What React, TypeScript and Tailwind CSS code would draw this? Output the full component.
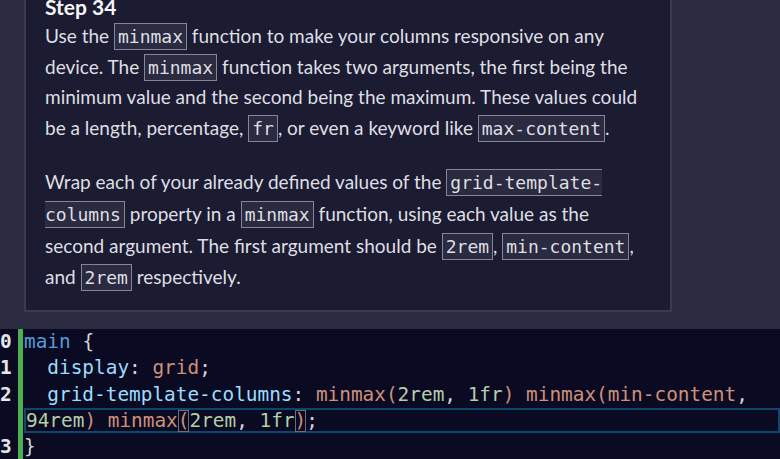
import React from "react";

const mono = "font-['DejaVu_Sans_Mono','Liberation_Mono',monospace]";

function Code({ children }: { children: React.ReactNode }) {
  return (
    <code
      className={`${mono} text-[18px] leading-none px-[3px] py-[2px] border border-[#85859a] bg-[#2a2a40] text-[#dfdfe2]`}
    >
      {children}
    </code>
  );
}

type Tok = { t: string; c?: string; match?: boolean };

const SEL = "text-[#569cd6]";
const PROP = "text-[#9cdcfe]";
const VAL = "text-[#ce9178]";
const NUM = "text-[#b5cea8]";
const PUN = "text-[#d4d4d4]";

const rows: { n?: string; toks: Tok[]; active?: boolean }[] = [
  { n: "0", toks: [{ t: "main", c: SEL }, { t: " {", c: PUN }] },
  {
    n: "1",
    toks: [
      { t: "  display", c: PROP },
      { t: ": ", c: PUN },
      { t: "grid", c: VAL },
      { t: ";", c: PUN },
    ],
  },
  {
    n: "2",
    toks: [
      { t: "  grid-template-columns", c: PROP },
      { t: ": ", c: PUN },
      { t: "minmax(", c: VAL },
      { t: "2rem", c: NUM },
      { t: ", ", c: PUN },
      { t: "1fr", c: NUM },
      { t: ") minmax(min-content", c: VAL },
      { t: ",", c: PUN },
    ],
  },
  {
    active: true,
    toks: [
      { t: "94rem", c: NUM },
      { t: ") minmax", c: VAL },
      { t: "(", c: VAL, match: true },
      { t: "2rem", c: NUM },
      { t: ", ", c: PUN },
      { t: "1fr", c: NUM },
      { t: ")", c: VAL, match: true },
      { t: ";", c: PUN },
    ],
  },
  { n: "3", toks: [{ t: "}", c: PUN }] },
];

export default function App() {
  return (
    <div className="w-[780px] h-[459px] overflow-hidden bg-[#2a2a40] flex flex-col font-['Lato',sans-serif]">
      {/* instructions panel, scrolled so its top is cut off */}
      <div className="h-[329px] shrink-0 flex flex-col justify-end overflow-hidden pl-[24px] pb-[17px]">
        <div className="w-[648px] border-2 border-t-0 border-[#3b3b4f] bg-[#1b1b32] px-[19px] pb-[17px] text-[#dfdfe2] text-[19px]">
          <h2 className="text-[21px] font-bold leading-[27.5px] text-[#f5f6f7]">Step 34</h2>
          <p className="leading-[30.7px] whitespace-nowrap">
            Use the <Code>minmax</Code> function to make your columns responsive on any
            <br />
            device. The <Code>minmax</Code> function takes two arguments, the first being the
            <br />
            minimum value and the second being the maximum. These values could
            <br />
            be a length, percentage, <Code>fr</Code>, or even a keyword like <Code>max-content</Code>.
          </p>
          <p className="mt-[22.4px] leading-[31.7px] whitespace-nowrap">
            Wrap each of your already defined values of the{" "}
            <Code>
              grid-template-
              <br />
              columns
            </Code>{" "}
            property in a <Code>minmax</Code> function, using each value as the
            <br />
            second argument. The first argument should be <Code>2rem</Code>, <Code>min-content</Code>,
            <br />
            and <Code>2rem</Code> respectively.
          </p>
        </div>
      </div>

      {/* code editor */}
      <div className={`flex-1 bg-[#0a0a23] ${mono} text-[19.4px] leading-[26.25px] whitespace-pre`}>
        {rows.map((r, i) => (
          <div key={i} className="flex h-[26.25px]">
            <div className="w-[18px] shrink-0 font-bold text-[#e6e6ea]">{r.n ?? ""}</div>
            <div className="w-[5px] shrink-0 bg-[#4caf50]" />
            <div
              className={`flex-1 ${
                r.active
                  ? "ml-[1px] border-2 border-[#0f476c] h-[25.5px] leading-[22px]"
                  : "pl-[1px]"
              }`}
            >
              {r.toks.map((tk, j) => (
                <span
                  key={j}
                  className={`${tk.c ?? ""} ${
                    tk.match ? "inline-block h-[22px] shadow-[inset_0_0_0_1px_#6f6f7a]" : ""
                  }`}
                >
                  {tk.t}
                </span>
              ))}
            </div>
          </div>
        ))}
      </div>
    </div>
  );
}
